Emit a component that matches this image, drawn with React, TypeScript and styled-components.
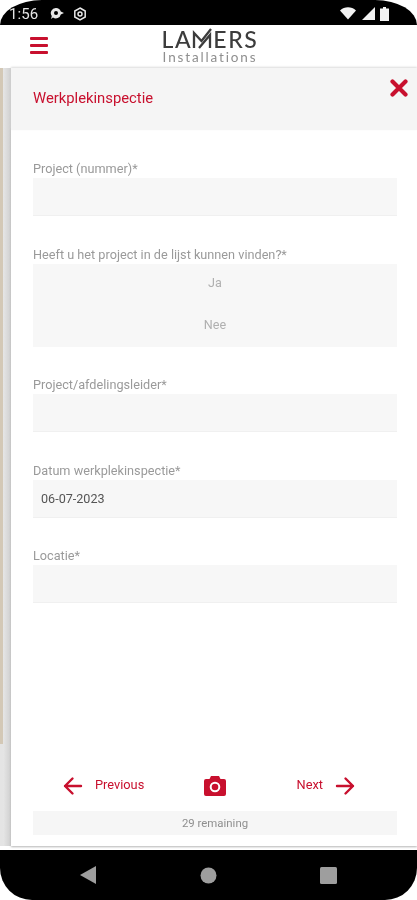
import React from "react";
import styled, { createGlobalStyle } from "styled-components";

const Global = createGlobalStyle`
  html, body { margin: 0; padding: 0; background: #fff; }
  * { box-sizing: border-box; }
`;

const RED = "#c8102e";

const Screen = styled.div`
  width: 417px;
  height: 900px;
  display: flex;
  flex-direction: column;
  background: #fff;
  font-family: Roboto, "Liberation Sans", sans-serif;
  overflow: hidden;
  filter: blur(0.6px);
`;

const StatusBar = styled.div`
  height: 25px;
  flex: none;
  background: #000;
  border-radius: 42px 42px 0 0 / 25px 25px 0 0;
  display: flex;
  align-items: center;
  padding: 2px 28px 0 10px;
  color: #e4e4e4;
  overflow: hidden;
`;

const Time = styled.span`
  font-size: 15px;
  width: 28px;
  text-indent: -1px;
  letter-spacing: 0.1px;
`;

const StatusIcons = styled.div`
  display: flex;
  align-items: center;
  gap: 8px;
  margin-left: 12px;
`;

const SystemIcons = styled.div`
  display: flex;
  align-items: center;
  gap: 5px;
  margin-left: auto;
`;

const Header = styled.header`
  height: 42px;
  flex: none;
  display: flex;
  align-items: center;
  padding-left: 30px;
  background: #fff;
`;

const Burger = styled.div`
  width: 18px;
  display: flex;
  flex-direction: column;
  gap: 4px;
  margin-top: -1px;
`;

const BurgerLine = styled.span`
  display: block;
  height: 3px;
  background: ${RED};
  border-radius: 1px;
`;

const Logo = styled.div`
  margin-left: 113px;
  width: 98px;
  display: flex;
  flex-direction: column;
  align-items: center;
`;

const LogoName = styled.div`
  display: flex;
  align-items: center;
  height: 20px;
  font-family: Lato, "Liberation Sans", sans-serif;
  font-size: 23px;
  line-height: 20px;
  font-weight: 500;
  color: #3c3c3c;
  letter-spacing: 1.6px;
`;

const LogoSub = styled.div`
  font-family: Lato, "Liberation Sans", sans-serif;
  font-size: 13.5px;
  line-height: 13px;
  color: #8f8f8f;
  letter-spacing: 1.85px;
  margin-top: 2px;
`;

const Body = styled.div`
  flex: 1;
  display: flex;
  min-height: 0;
`;

const Backdrop = styled.div`
  width: 11px;
  flex: none;
  margin: 1px 0 5px;
  display: flex;
  background: #e4e4e4;
`;

const BackdropEdge = styled.div`
  width: 3px;
  height: 676px;
  background: #d3c8b6;
`;

const BackdropShade = styled.div`
  flex: 1;
  background: linear-gradient(90deg, #e6e6e6, #cfcfcf);
`;

const Panel = styled.main`
  flex: 1;
  display: flex;
  flex-direction: column;
  background: #fff;
  margin: 1px 0 5px;
  box-shadow: 0 1px 2px #b5b5b5;
`;

const TitleBar = styled.div`
  height: 62px;
  flex: none;
  background: #f5f5f5;
  padding: 21px 9px 0 22px;
  display: flex;
  justify-content: space-between;
  align-items: flex-start;
  box-shadow: 0 -1px 2px #dcdcdc;
`;

const Title = styled.h1`
  margin: 0;
  font-size: 14.8px;
  line-height: 18px;
  font-weight: 400;
  color: ${RED};
`;

const CloseIcon = styled.svg`
  width: 18px;
  height: 18px;
  margin-top: -10px;
`;

const Form = styled.div`
  flex: 1;
  padding: 30px 20px 0 22px;
  display: flex;
  flex-direction: column;
`;

const Field = styled.div`
  margin-bottom: 30px;
  &:nth-of-type(2) { margin-bottom: 29px; }
  &:nth-of-type(4) { margin-bottom: 29px; }
`;

const Label = styled.div`
  font-size: 12.7px;
  line-height: 18px;
  color: #9a9a9a;
`;

const Input = styled.div`
  height: 38px;
  background: #f7f7f7;
  border-bottom: 1px solid #f0f0f0;
  padding: 0 8px;
  display: flex;
  align-items: center;
  font-size: 12.6px;
  color: #555;
`;

const Choices = styled.div`
  height: 83px;
  background: #f7f7f7;
  display: flex;
  flex-direction: column;
  gap: 6px;
`;

const Choice = styled.div`
  height: 36px;
  flex: none;
  display: flex;
  align-items: center;
  justify-content: center;
  font-size: 12.6px;
  color: #b0b0b0;
`;

const Footer = styled.footer`
  flex: none;
  padding: 0 20px 11px 22px;
`;

const Actions = styled.div`
  height: 40px;
  display: grid;
  grid-template-columns: 1fr 40px 1fr;
  align-items: center;
  margin-bottom: 5px;
`;

const NavButton = styled.div<{ $end?: boolean }>`
  display: flex;
  align-items: center;
  gap: 12px;
  color: ${RED};
  font-size: 12.8px;
  line-height: 16px;
  justify-content: ${(p) => (p.$end ? "flex-end" : "flex-start")};
  padding: ${(p) => (p.$end ? "0 42px 0 0" : "0 0 0 30px")};
`;

const NavLabel = styled.span`
  margin-top: -2px;
`;

const CameraSlot = styled.div`
  display: flex;
  justify-content: center;
`;

const Remaining = styled.div`
  height: 24px;
  background: #f6f6f6;
  display: flex;
  align-items: center;
  justify-content: center;
  font-size: 11.4px;
  color: #8f8f8f;
`;

const NavBar = styled.nav`
  height: 50px;
  flex: none;
  background: #000;
  border-radius: 0 0 32px 32px;
  display: flex;
  align-items: center;
  justify-content: space-between;
  padding: 0 80px 0 80px;
  margin-top: -1px;
`;

const Arrow = ({ left }: { left?: boolean }) => (
  <svg width="20" height="20" viewBox="0 0 20 20" fill="none" stroke={RED} strokeWidth="2.4" strokeLinecap="round" strokeLinejoin="round">
    {left ? <path d="M18 10H2M9.500 2.500 2 10l7.500 7.500" /> : <path d="M2 10h16M10.500 2.500 18 10l-7.500 7.500" />}
  </svg>
);

export default function App() {
  return (
    <Screen>
      <Global />
      <StatusBar>
        <Time>1:56</Time>
        <StatusIcons>
          <svg width="15" height="13" viewBox="0 0 15 13" fill="#e8e8e8">
            <path d="M6 1a5 5 0 0 1 4.800 3.500L14 6l-3.200 1.500A5 5 0 0 1 3 10.500L1 12l.8-3A5 5 0 0 1 6 1z" />
            <circle cx="6" cy="6" r="2" fill="#000" />
          </svg>
          <svg width="14" height="14" viewBox="0 0 14 14" fill="none" stroke="#e8e8e8" strokeWidth="1.5">
            <path d="M7 1l5.200 3v6L7 13l-5.200-3V4z" />
            <circle cx="7" cy="7" r="2" />
          </svg>
        </StatusIcons>
        <SystemIcons>
          <svg width="16" height="13" viewBox="0 0 16 13" fill="#f2f2f2"><path d="M0 3.500C4.500-.8 11.500-.8 16 3.500L8 12.500z" /></svg>
          <svg width="14" height="13" viewBox="0 0 14 13" fill="#f2f2f2"><path d="M14 0v13H1z" /></svg>
          <svg width="9" height="14" viewBox="0 0 9 14" fill="#f2f2f2"><path d="M3 0h3v1.500h3V14H0V1.500h3z" /></svg>
        </SystemIcons>
      </StatusBar>

      <Header>
        <Burger>
          <BurgerLine />
          <BurgerLine />
          <BurgerLine />
        </Burger>
        <Logo>
          <LogoName>
            LA
            <svg width="21" height="22" viewBox="0 0 21 22" fill="none" stroke="#3c3c3c" strokeWidth="2.3">
              <path d="M2 20V5l7.500 8L19 1" />
              <path d="M7 20l11-13v13" />
            </svg>
            ERS
          </LogoName>
          <LogoSub>Installations</LogoSub>
        </Logo>
      </Header>

      <Body>
        <Backdrop>
          <BackdropEdge />
          <BackdropShade />
        </Backdrop>
        <Panel>
          <TitleBar>
            <Title>Werkplekinspectie</Title>
            <CloseIcon viewBox="0 0 18 18" fill="none" stroke={RED} strokeWidth="4.2" strokeLinecap="round">
              <path d="M2.500 2.500l13 13M15.500 2.500l-13 13" />
            </CloseIcon>
          </TitleBar>
          <Form>
            <Field>
              <Label>Project (nummer)*</Label>
              <Input />
            </Field>
            <Field>
              <Label>Heeft u het project in de lijst kunnen vinden?*</Label>
              <Choices>
                <Choice>Ja</Choice>
                <Choice>Nee</Choice>
              </Choices>
            </Field>
            <Field>
              <Label>Project/afdelingsleider*</Label>
              <Input />
            </Field>
            <Field>
              <Label>Datum werkplekinspectie*</Label>
              <Input>06-07-2023</Input>
            </Field>
            <Field>
              <Label>Locatie*</Label>
              <Input />
            </Field>
          </Form>
          <Footer>
            <Actions>
              <NavButton>
                <Arrow left />
                <NavLabel>Previous</NavLabel>
              </NavButton>
              <CameraSlot>
                <svg width="22" height="20" viewBox="0 0 22 20">
                  <path fill={RED} d="M7 0h8l1.500 3H20a2 2 0 0 1 2 2v13a2 2 0 0 1-2 2H2a2 2 0 0 1-2-2V5a2 2 0 0 1 2-2h3.500z" />
                  <circle cx="11" cy="11" r="4.300" fill="none" stroke="#fff" strokeWidth="2" />
                </svg>
              </CameraSlot>
              <NavButton $end>
                <NavLabel>Next</NavLabel>
                <Arrow />
              </NavButton>
            </Actions>
            <Remaining>29 remaining</Remaining>
          </Footer>
        </Panel>
      </Body>

      <NavBar>
        <svg width="17" height="18" viewBox="0 0 17 18" fill="#9e9e9e"><path d="M16 0v18L0 9z" /></svg>
        <svg width="17" height="17" viewBox="0 0 17 17" fill="#9e9e9e"><circle cx="8.500" cy="8.500" r="8" /></svg>
        <svg width="17" height="17" viewBox="0 0 17 17" fill="#9e9e9e"><rect width="17" height="17" rx="1.500" /></svg>
      </NavBar>
    </Screen>
  );
}
